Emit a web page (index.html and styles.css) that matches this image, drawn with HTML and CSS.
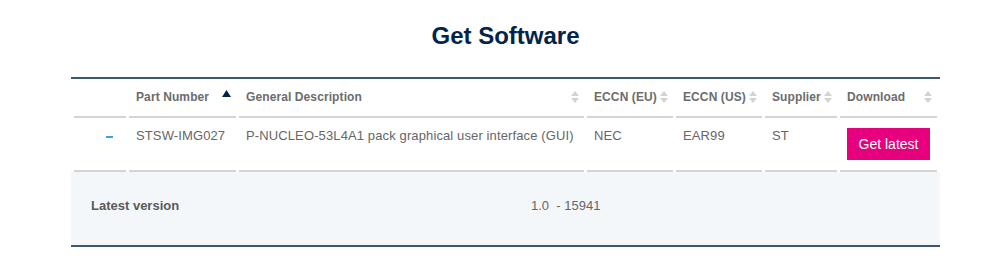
FILE: index.html
```html
<!DOCTYPE html>
<html lang="en">
<head>
<meta charset="utf-8">
<title>Get Software</title>
<link rel="stylesheet" href="styles.css">
</head>
<body>
<section class="software">
  <h1 class="software-title">Get Software</h1>
  <table class="sw-table">
    <colgroup>
      <col class="c-toggle"><col class="c-part"><col class="c-desc"><col class="c-eu"><col class="c-us"><col class="c-sup"><col class="c-dl">
    </colgroup>
    <thead>
      <tr>
        <th></th>
        <th><div class="th-in"><span>Part Number</span>
          <svg class="sort" width="9" height="14" viewBox="0 0 9 14"><polygon points="0,7 4.5,0 9,7" fill="#03234b"/></svg></div></th>
        <th><div class="th-in"><span>General Description</span>
          <svg class="sort" width="8" height="14" viewBox="0 0 8 14"><polygon points="0,6 4,1 8,6" fill="#d3d3d3"/><polygon points="0,8 4,13 8,8" fill="#d3d3d3"/></svg></div></th>
        <th><div class="th-in"><span>ECCN (EU)</span>
          <svg class="sort" width="8" height="14" viewBox="0 0 8 14"><polygon points="0,6 4,1 8,6" fill="#d3d3d3"/><polygon points="0,8 4,13 8,8" fill="#d3d3d3"/></svg></div></th>
        <th><div class="th-in"><span>ECCN (US)</span>
          <svg class="sort" width="8" height="14" viewBox="0 0 8 14"><polygon points="0,6 4,1 8,6" fill="#d3d3d3"/><polygon points="0,8 4,13 8,8" fill="#d3d3d3"/></svg></div></th>
        <th><div class="th-in"><span>Supplier</span>
          <svg class="sort" width="8" height="14" viewBox="0 0 8 14"><polygon points="0,6 4,1 8,6" fill="#d3d3d3"/><polygon points="0,8 4,13 8,8" fill="#d3d3d3"/></svg></div></th>
        <th><div class="th-in"><span>Download</span>
          <svg class="sort" width="8" height="14" viewBox="0 0 8 14"><polygon points="0,6 4,1 8,6" fill="#d3d3d3"/><polygon points="0,8 4,13 8,8" fill="#d3d3d3"/></svg></div></th>
      </tr>
    </thead>
    <tbody>
      <tr>
        <td class="toggle"><span class="minus"></span></td>
        <td>STSW-IMG027</td>
        <td>P-NUCLEO-53L4A1 pack graphical user interface (GUI)</td>
        <td>NEC</td>
        <td>EAR99</td>
        <td>ST</td>
        <td><a class="btn" href="#">Get latest</a></td>
      </tr>
    </tbody>
  </table>
  <div class="version-row">
    <span class="version-label">Latest version</span>
    <span class="version-value">1.0&nbsp; - 15941</span>
  </div>
</section>
</body>
</html>
```
FILE: styles.css
```css
html, body {
  margin: 0;
  padding: 0;
  background: #fff;
  font-family: "Liberation Sans", Arial, sans-serif;
}

.software {
  width: 869px;
  margin-left: 71px;
}

.software-title {
  margin: 22px 0 27px;
  font-size: 24px;
  line-height: 28px;
  font-weight: bold;
  color: #03234b;
  text-align: center;
}

.sw-table {
  width: 869px;
  table-layout: fixed;
  border-collapse: separate;
  border-spacing: 3px 0;
  border-top: 2px solid #3c5675;
}

.c-toggle { width: 52px; }
.c-part { width: 107px; }
.c-desc { width: 345px; }
.c-eu { width: 86px; }
.c-us { width: 86px; }
.c-sup { width: 72px; }
.c-dl { width: 97px; }

.sw-table th {
  height: 35px;
  padding: 0 5px 2px 7px;
  border-bottom: 2px solid #d4d4d4;
  font-size: 12px;
  font-weight: bold;
  letter-spacing: 0.1px;
  color: #6c6c6c;
  text-align: left;
  vertical-align: middle;
  white-space: nowrap;
}

.th-in {
  display: flex;
  align-items: center;
  justify-content: space-between;
}

.sort {
  display: block;
  flex: none;
  margin-top: 1px;
}

.sw-table td {
  padding: 10px 6px 10px 7px;
  border-bottom: 2px solid #d4d4d4;
  font-size: 13px;
  line-height: 15px;
  letter-spacing: 0.12px;
  color: #666;
  vertical-align: top;
  white-space: nowrap;
}

.sw-table td.toggle {
  text-align: right;
  padding-right: 13px;
}

.minus {
  display: inline-block;
  width: 7px;
  height: 2px;
  margin-top: 8px;
  background: #3ea1dc;
  vertical-align: top;
}

.btn {
  display: inline-block;
  width: 83px;
  height: 32px;
  line-height: 32px;
  background: #e6007e;
  color: #fff;
  font-size: 14px;
  letter-spacing: 0;
  text-align: center;
  text-decoration: none;
}

.version-row {
  display: grid;
  grid-template-columns: 440px 1fr;
  align-items: center;
  height: 67px;
  padding: 0 0 6px 20px;
  background: #f4f7fa;
  border-bottom: 2px solid #3c5675;
  font-size: 13px;
  color: #666;
}

.version-label {
  font-weight: bold;
  color: #5a5a5a;
}
```
